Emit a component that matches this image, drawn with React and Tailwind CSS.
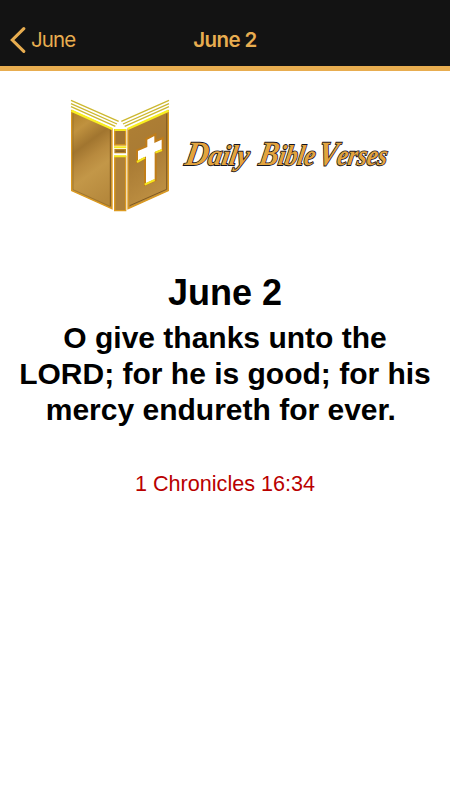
function BookLogo() {
  return (
    <svg viewBox="0 0 360 390" className="w-[120px] h-[130px] shrink-0">
      <defs>
        <linearGradient id="cover" x1="0.25" y1="0" x2="0.55" y2="1">
          <stop offset="0" stopColor="#b3842f" />
          <stop offset="0.15" stopColor="#c0923f" />
          <stop offset="0.34" stopColor="#a1752f" />
          <stop offset="0.5" stopColor="#b88a3e" />
          <stop offset="0.65" stopColor="#c39748" />
          <stop offset="1" stopColor="#b5883c" />
        </linearGradient>
        <linearGradient id="front" x1="0" y1="0" x2="0.3" y2="1">
          <stop offset="0" stopColor="#b08034" />
          <stop offset="0.5" stopColor="#a97b34" />
          <stop offset="1" stopColor="#bd8f42" />
        </linearGradient>
      </defs>
      {/* pages */}
      <g fill="none" stroke="#cdb830" strokeWidth="4">
        <path d="M33 31 L176 94 M184 94 L327 31" />
        <path d="M33 41 L171 102 M189 102 L327 41" />
        <path d="M33 50 L166 109 M194 109 L327 50" />
      </g>
      {/* back cover */}
      <path d="M35 62 L156 117 V356 L35 302 Z" fill="url(#cover)" stroke="#dc9a20" strokeWidth="4" />
      <path d="M34 62 L157 117" stroke="#f8ef22" strokeWidth="7" />
      <path d="M39 70 V299 L150 349" fill="none" stroke="#936a26" strokeWidth="2" />
      <path d="M151 120 V349" stroke="#805820" strokeWidth="3" />
      {/* front cover */}
      <path d="M204 117 L325 62 V302 L204 356 Z" fill="url(#front)" stroke="#dc9a20" strokeWidth="4" />
      <path d="M203 117 L326 62" stroke="#f8ef22" strokeWidth="7" />
      <path d="M320 71 V298 L209 347" fill="none" stroke="#80591f" strokeWidth="3" />
      {/* spine */}
      <path d="M164 119 H197 V165 H164 Z" fill="#a27430" stroke="#dc9a20" strokeWidth="4" />
      <path d="M164 199 H197 V362 H164 Z" fill="#ae8038" stroke="#dc9a20" strokeWidth="4" />
      <path d="M165 179 H196 V188 H165 Z" fill="#87602b" stroke="#b88327" strokeWidth="4" />
      <path d="M163 120 H198 M162 172 H199 M162 199 H199" stroke="#f5e91d" strokeWidth="6" />
      {/* cross */}
      <path
        d="M259 147 L286 133 V154 L308 144 V180 L287 188 V270 L255 284 V204 L231 216 V181 L259 169 Z"
        fill="#fff"
        stroke="#c17d18"
        strokeWidth="6"
      />
      <path d="M231 216 L255 203 M254 284 L284 270 M286 188 L306 180" stroke="#f4e51e" strokeWidth="6" />
    </svg>
  )
}

function Wordmark() {
  return (
    <svg viewBox="0 0 220 60" className="w-[220px] h-[60px] mt-[35px]">
      <g
        transform="translate(7 0) skewX(-10)"
        className="font-['Brush_Script_MT','Liberation_Serif',cursive] italic font-bold text-[29px]"
        fill="#e3a43e"
        stroke="#15151f"
        strokeWidth="1.8"
        paintOrder="stroke"
      >
        <text x="4" y="40" textLength="64" lengthAdjust="spacingAndGlyphs">
          <tspan className="text-[34px]">D</tspan>aily
        </text>
        <text x="78" y="40" textLength="56" lengthAdjust="spacingAndGlyphs">
          <tspan className="text-[34px]">B</tspan>ible
        </text>
        <text x="137" y="40" textLength="69" lengthAdjust="spacingAndGlyphs">
          <tspan className="text-[34px]">V</tspan>erses
        </text>
      </g>
    </svg>
  )
}

export default function App() {
  return (
    <div className="w-[450px] h-[800px] bg-white overflow-hidden font-['Liberation_Sans',Arial,sans-serif]">
      <header className="h-[71px] pt-[14px] bg-[#131313] border-b-5 border-[#e8ad50] text-[#e8ad50] grid grid-cols-3 items-center font-[Inter,sans-serif] text-[20.5px]">
        <button className="flex items-center pl-[10px]">
          <svg viewBox="0 0 16 26" className="w-4 h-[26px]" fill="none">
            <path d="M13.8 1.7 L2.3 13 L13.8 24.3" stroke="currentColor" strokeWidth="3.1" strokeLinecap="round" />
          </svg>
          <span className="ml-[5px] tracking-[-0.9px]">June</span>
        </button>
        <h1 className="text-center font-semibold tracking-[-0.6px]">June 2</h1>
      </header>
      <main className="text-center">
        <div className="flex pl-[60px] pt-[19px]">
          <BookLogo />
          <Wordmark />
        </div>
        <h2 className="mt-[53px] text-[36px] leading-[40px] font-bold">June 2</h2>
        <p className="mt-[7px] text-[30px] leading-[36px] font-bold whitespace-pre">
          O give thanks unto the
          <br />
          LORD; for he is good; for his
          <br />
          {'mercy endureth for ever.\u00a0'}
        </p>
        <p className="mt-[43px] text-[21.6px] leading-[26px] text-[#b90000]">1 Chronicles 16:34</p>
      </main>
    </div>
  )
}
